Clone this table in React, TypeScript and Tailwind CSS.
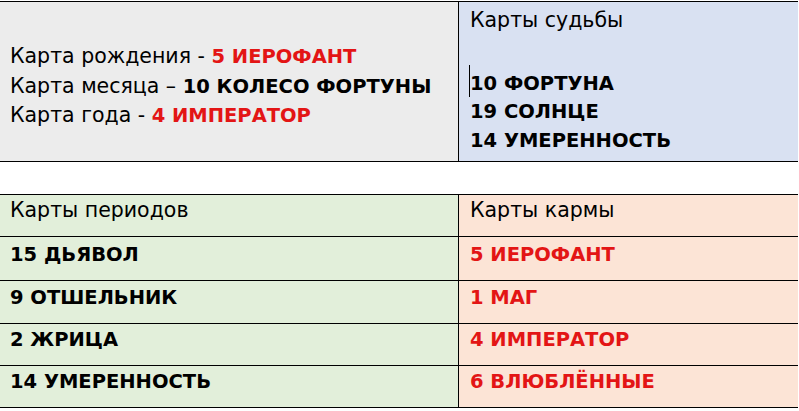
const font = { fontFamily: "'DejaVu Sans', 'Noto Sans', sans-serif" };

const periods = ["15 ДЬЯВОЛ", "9 ОТШЕЛЬНИК", "2 ЖРИЦА", "14 УМЕРЕННОСТЬ"];
const karma = ["5 ИЕРОФАНТ", "1 МАГ", "4 ИМПЕРАТОР", "6 ВЛЮБЛЁННЫЕ"];
const heights = ["h-[44px]", "h-[43px]", "h-[42px]", "h-[42px]"];

function Cell({ children, bg, divider }: { children: React.ReactNode; bg: string; divider?: boolean }) {
  return (
    <div className={`${bg} ${divider ? "border-r border-black pl-[10px]" : "pl-[11px]"} flex items-end pb-[16px]`}>
      {children}
    </div>
  );
}

export default function App() {
  return (
    <div className="w-[799px] h-[411px] overflow-hidden bg-white text-[20.5px] text-black" style={font}>
      <div className="pt-px w-[798px]">
        <div className="grid grid-cols-[459px_1fr] border-y border-black h-[161px]">
          <div className="bg-[#ececec] border-r border-black pl-[10px] leading-[28.5px] pt-[40px]">
            <div>
              Карта рождения - <b className="text-[19.5px] text-[#e31515]">5 ИЕРОФАНТ</b>
            </div>
            <div>
              Карта месяца – <b className="text-[19.5px]">10 КОЛЕСО ФОРТУНЫ</b>
            </div>
            <div>
              Карта года - <b className="text-[19.5px] text-[#e31515]">4 ИМПЕРАТОР</b>
            </div>
          </div>
          <div className="relative bg-[#d9e1f2] pl-[11px] leading-[28.5px] pt-[4px]">
            <div>Карты судьбы</div>
            <div className="mt-[35px] text-[19.5px] font-bold">10 ФОРТУНА</div>
            <div className="text-[19.5px] font-bold">19 СОЛНЦЕ</div>
            <div className="text-[19.5px] font-bold">14 УМЕРЕННОСТЬ</div>
            <span className="absolute left-[10px] top-[63px] w-px h-[32px] bg-black" />
          </div>
        </div>

        <div className="mt-[32px] border-t border-black">
          <div className="grid grid-cols-[459px_1fr] border-b border-black h-[42px]">
            <Cell bg="bg-[#e2efda]" divider>
              <span className="leading-none">Карты периодов</span>
            </Cell>
            <Cell bg="bg-[#fce4d6]">
              <span className="leading-none">Карты кармы</span>
            </Cell>
          </div>
          {periods.map((p, i) => (
            <div key={p} className={`grid grid-cols-[459px_1fr] border-b border-black ${heights[i]}`}>
              <Cell bg="bg-[#e2efda]" divider>
                <span className="leading-none text-[19.5px] font-bold">{p}</span>
              </Cell>
              <Cell bg="bg-[#fce4d6]">
                <span className="leading-none text-[19.5px] font-bold text-[#e31515]">{karma[i]}</span>
              </Cell>
            </div>
          ))}
        </div>
      </div>
    </div>
  );
}
